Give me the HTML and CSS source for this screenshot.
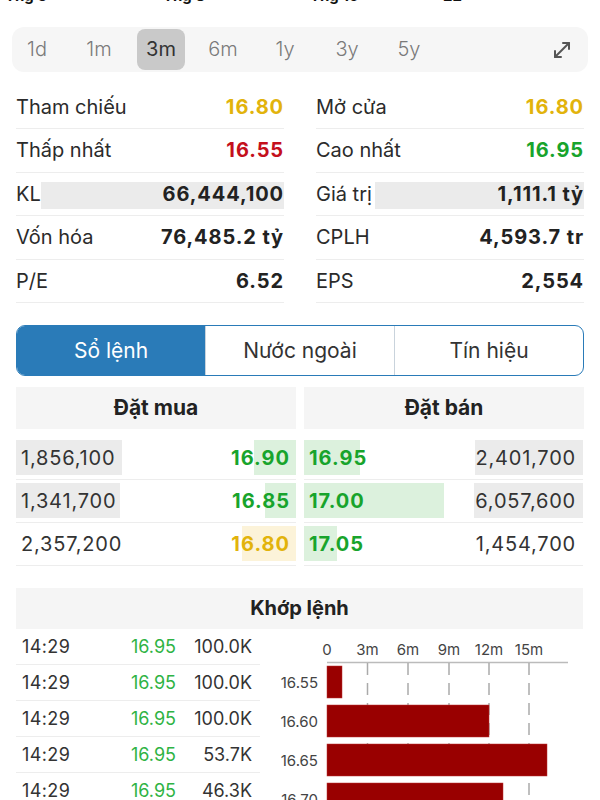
FILE: index.html
```html
<!DOCTYPE html>
<html lang="vi">
<head>
    <meta charset="UTF-8">
    <meta name="viewport" content="width=device-width, initial-scale=1.0">
    <title>Chi tiết cổ phiếu</title>
    <link rel="stylesheet" href="styles.css">
</head>
<body>
    <!-- chart month labels, cut off at the top -->
    <div class="month-strip">
        <span>Thg 5</span>
        <span>Thg 8</span>
        <span>Thg 10</span>
        <span>22</span>
    </div>

    <div class="periods">
        <span class="period">1d</span>
        <span class="period">1m</span>
        <span class="period active">3m</span>
        <span class="period">6m</span>
        <span class="period">1y</span>
        <span class="period">3y</span>
        <span class="period">5y</span>
        <span class="expand">
            <svg width="22" height="22" viewBox="0 0 22 22" fill="none" stroke="#555" stroke-width="2" stroke-linecap="round" stroke-linejoin="round">
                <path d="M4 18 L18 4"/>
                <path d="M12 4 H18 V10"/>
                <path d="M4 12 V18 H10"/>
            </svg>
        </span>
    </div>

    <div class="stats">
        <div class="stat"><span class="label">Tham chiếu</span><span class="value ref">16.80</span></div>
        <div class="stat"><span class="label">Mở cửa</span><span class="value ref">16.80</span></div>
        <div class="stat"><span class="label">Thấp nhất</span><span class="value down">16.55</span></div>
        <div class="stat"><span class="label">Cao nhất</span><span class="value up">16.95</span></div>
        <div class="stat"><span class="fill" style="width: 243px"></span><span class="label">KL</span><span class="value">66,444,100</span></div>
        <div class="stat"><span class="fill" style="width: 209px"></span><span class="label">Giá trị</span><span class="value">1,111.1 tỷ</span></div>
        <div class="stat"><span class="label">Vốn hóa</span><span class="value">76,485.2 tỷ</span></div>
        <div class="stat"><span class="label">CPLH</span><span class="value">4,593.7 tr</span></div>
        <div class="stat"><span class="label">P/E</span><span class="value">6.52</span></div>
        <div class="stat"><span class="label">EPS</span><span class="value">2,554</span></div>
    </div>

    <div class="tabs">
        <div class="tab active">Sổ lệnh</div>
        <div class="tab">Nước ngoài</div>
        <div class="tab">Tín hiệu</div>
    </div>

    <div class="book">
        <div class="side">
            <div class="side-title">Đặt mua</div>
            <div class="book-row">
                <span class="cell vol"><span class="bar grey left" style="width: 106px"></span>1,856,100</span>
                <span class="cell price up"><span class="bar green right" style="width: 42px"></span>16.90</span>
            </div>
            <div class="book-row">
                <span class="cell vol"><span class="bar grey left" style="width: 104px"></span>1,341,700</span>
                <span class="cell price up"><span class="bar green right" style="width: 31px"></span>16.85</span>
            </div>
            <div class="book-row">
                <span class="cell vol">2,357,200</span>
                <span class="cell price ref"><span class="bar yellow right" style="width: 54px"></span>16.80</span>
            </div>
        </div>
        <div class="side">
            <div class="side-title">Đặt bán</div>
            <div class="book-row">
                <span class="cell price up"><span class="bar green left" style="width: 56px"></span>16.95</span>
                <span class="cell vol"><span class="bar grey right" style="width: 108px"></span>2,401,700</span>
            </div>
            <div class="book-row">
                <span class="cell price up"><span class="bar green left" style="width: 140px"></span>17.00</span>
                <span class="cell vol"><span class="bar grey right" style="width: 109px"></span>6,057,600</span>
            </div>
            <div class="book-row">
                <span class="cell price up"><span class="bar green left" style="width: 33px"></span>17.05</span>
                <span class="cell vol">1,454,700</span>
            </div>
        </div>
    </div>

    <div class="matched">
        <div class="matched-title">Khớp lệnh</div>
        <div class="matched-body">
            <div class="trades">
                <div class="trade"><span class="time">14:29</span><span class="t-price">16.95</span><span class="t-vol">100.0K</span></div>
                <div class="trade"><span class="time">14:29</span><span class="t-price">16.95</span><span class="t-vol">100.0K</span></div>
                <div class="trade"><span class="time">14:29</span><span class="t-price">16.95</span><span class="t-vol">100.0K</span></div>
                <div class="trade"><span class="time">14:29</span><span class="t-price">16.95</span><span class="t-vol">53.7K</span></div>
                <div class="trade"><span class="time">14:29</span><span class="t-price">16.95</span><span class="t-vol">46.3K</span></div>
            </div>
            <svg class="volume-chart" width="324" height="171" viewBox="0 0 324 171">
                <g class="ticks" text-anchor="middle">
                    <text x="67" y="26">0</text>
                    <text x="107.5" y="26">3m</text>
                    <text x="148" y="26">6m</text>
                    <text x="189" y="26">9m</text>
                    <text x="229" y="26">12m</text>
                    <text x="269" y="26">15m</text>
                </g>
                <line x1="67" y1="33.5" x2="308" y2="33.5" stroke="#bbb" stroke-width="1.5"/>
                <g stroke="#aaa" stroke-width="1.5" stroke-dasharray="12 8">
                    <line x1="107.5" y1="34" x2="107.5" y2="171"/>
                    <line x1="148" y1="34" x2="148" y2="171"/>
                    <line x1="189" y1="34" x2="189" y2="171"/>
                    <line x1="229" y1="34" x2="229" y2="171"/>
                    <line x1="269" y1="34" x2="269" y2="171"/>
                </g>
                <g fill="#990000" stroke="#b33" stroke-width="0.5">
                    <rect x="67" y="37" width="15" height="32"/>
                    <rect x="67" y="76" width="162" height="32"/>
                    <rect x="67" y="115" width="220" height="32"/>
                    <rect x="67" y="154" width="176" height="32"/>
                </g>
                <g class="prices" text-anchor="end">
                    <text x="58" y="59">16.55</text>
                    <text x="58" y="98">16.60</text>
                    <text x="58" y="137">16.65</text>
                    <text x="58" y="176">16.70</text>
                </g>
            </svg>
        </div>
    </div>
</body>
</html>
```

FILE: styles.css
```css
:root {
    --text: #2b2b2b;
    --muted: #7a7a7a;
    --line: #ededed;
    --panel: #f5f5f5;
    --blue: #2a7bb8;
    --up: #18a42c;
    --down: #c4101c;
    --ref: #e2b30c;
}

body {
    font-family: 'Inter', 'Noto Sans', sans-serif;
    margin: 0;
    padding: 0;
    width: 600px;
    height: 800px;
    overflow: hidden;
    background: #fff;
    color: var(--text);
}

.month-strip {
    height: 4px;
    overflow: hidden;
    display: grid;
    grid-template-columns: 158px 147px 133px auto;
    padding-left: 5px;
}

.month-strip span {
    display: block;
    margin-top: -12px;
    font-size: 15px;
    line-height: 15px;
    font-weight: 700;
    color: #111;
}

.periods {
    display: flex;
    align-items: center;
    gap: 14px;
    margin: 23px 12px 0;
    height: 45px;
    padding: 0 1px;
    background: #f6f6f6;
    border-radius: 12px;
}

.period {
    width: 48px;
    height: 41px;
    line-height: 41px;
    text-align: center;
    font-size: 20px;
    font-weight: 300;
    color: var(--muted);
    border-radius: 8px;
}

.period.active {
    background: #c9c9c9;
    color: #333;
    font-weight: 400;
}

.expand {
    display: flex;
    margin-left: auto;
    margin-right: 14px;
}

.stats {
    display: grid;
    grid-template-columns: 1fr 1fr;
    column-gap: 32px;
    margin: 13.5px 16px 0;
}

.stat {
    position: relative;
    display: flex;
    justify-content: space-between;
    align-items: center;
    height: 42.5px;
    border-bottom: 1px solid var(--line);
    font-size: 20px;
}

.stat .fill {
    position: absolute;
    right: 0;
    top: 9px;
    height: 27px;
    background: #ebebeb;
}

.stat .label,
.stat .value {
    position: relative;
}

.value {
    font-weight: 700;
    color: #222;
    letter-spacing: 0.9px;
}

.value.ref,
.price.ref {
    color: var(--ref);
}

.value.down {
    color: var(--down);
}

.value.up,
.price.up {
    color: var(--up);
}

.tabs {
    display: flex;
    margin: 21.5px 16px 0;
    height: 49px;
    border: 1.5px solid var(--blue);
    border-radius: 9px;
    overflow: hidden;
}

.tab {
    flex: 1;
    display: flex;
    justify-content: center;
    align-items: center;
    font-size: 21px;
    color: #333;
    border-left: 1px solid #c9d3dc;
}

.tab:first-child {
    border-left: none;
}

.tab.active {
    background: var(--blue);
    color: #fff;
}

.book {
    display: grid;
    grid-template-columns: 280px 280px;
    column-gap: 8px;
    margin: 11px 16px 0;
}

.side-title {
    height: 42px;
    line-height: 42px;
    text-align: center;
    background: var(--panel);
    font-size: 21px;
    font-weight: 700;
    color: #222;
    margin-bottom: 8px;
}

.side:last-child .book-row {
    margin-right: 1px;
}

.book-row {
    display: flex;
    justify-content: space-between;
    align-items: center;
    height: 42px;
    border-bottom: 1px solid var(--line);
    font-size: 20px;
}

.cell {
    position: relative;
    display: flex;
    align-items: center;
    height: 35px;
    z-index: 0;
}

.side:first-child .vol {
    padding-left: 5px;
}

.side:first-child .price {
    padding-right: 6px;
}

.side:last-child .price {
    padding-left: 5px;
}

.side:last-child .vol {
    padding-right: 7px;
}

.price {
    font-weight: 700;
    letter-spacing: 1px;
}

.vol {
    color: #333;
    letter-spacing: 0.8px;
}

.bar {
    position: absolute;
    top: 0;
    bottom: 0;
    z-index: -1;
}

.bar.left {
    left: 0;
}

.bar.right {
    right: 0;
}

.bar.grey {
    background: #ebebeb;
}

.bar.green {
    background: #dcf1dd;
}

.bar.yellow {
    background: #fcf3d9;
}

.matched {
    margin: 22px 16px 0;
}

.matched-title {
    height: 41px;
    line-height: 41px;
    text-align: center;
    background: var(--panel);
    font-size: 20px;
    font-weight: 700;
    color: #222;
    margin-right: 1px;
}

.matched-body {
    display: flex;
}

.trades {
    width: 244px;
}

.trade {
    display: flex;
    align-items: center;
    height: 35px;
    border-bottom: 1px solid var(--line);
    font-size: 18px;
}

.time {
    padding-left: 6px;
    width: 60px;
    color: #333;
    letter-spacing: 0.4px;
}

.t-price {
    width: 94px;
    text-align: right;
    color: #2fb344;
}

.t-vol {
    width: 76px;
    text-align: right;
    color: #333;
}

.volume-chart {
    display: block;
    font-family: 'Inter', 'Noto Sans', sans-serif;
}

.volume-chart text {
    font-size: 15px;
    fill: #444;
}
```
